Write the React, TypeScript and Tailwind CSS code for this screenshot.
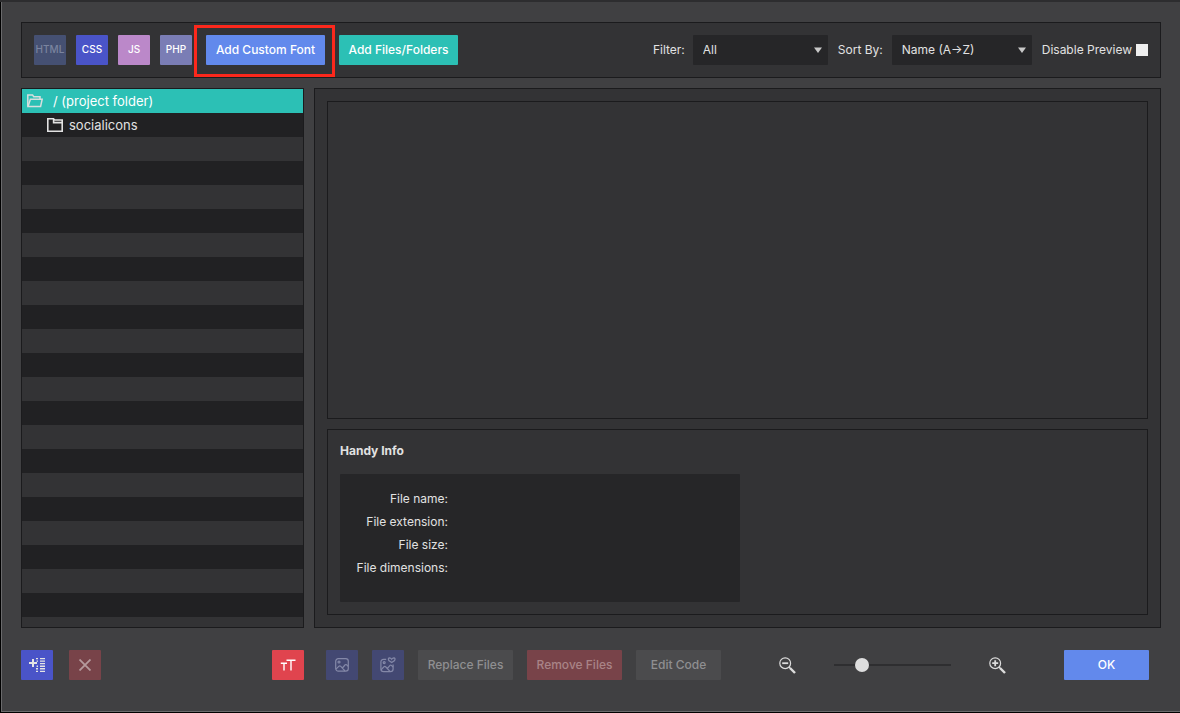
import { InputHTMLAttributes, ReactNode, SelectHTMLAttributes } from "react";

const badges = [
  { label: "HTML", className: "bg-[#455072] text-[#7b849f]", disabled: true },
  { label: "CSS", className: "bg-[#4a54c8] text-white" },
  { label: "JS", className: "bg-[#bb88c9] text-white" },
  { label: "PHP", className: "bg-[#7a7db5] text-white" },
];

const fileInfo = ["File name:", "File extension:", "File size:", "File dimensions:"];

function FolderOpenIcon() {
  return (
    <svg width="16" height="14" viewBox="0 0 16 14" fill="none" stroke="currentColor" strokeWidth="1.5">
      <path d="M.8 12.4V1h4.8l1.2 1.8H13v2.4" />
      <path d="M1 12.4 3.4 5.2H15.2L13.6 12.4Z" />
    </svg>
  );
}

function FolderIcon() {
  return (
    <svg width="16" height="14" viewBox="0 0 16 14" fill="none" stroke="currentColor" strokeWidth="1.6">
      <path d="M.8 13.2V.8h5.7l1.2 1.2h7.5v11.2Z" />
      <path d="M6.6 1v3.6h8.4" />
    </svg>
  );
}

function AddListIcon() {
  return (
    <svg width="16" height="14" viewBox="0 0 16 14" fill="currentColor">
      <path d="M0 4h3V1h2v3h3v2H5v3H3V6H0Z" />
      <path d="M11 0h5v1.3h-5zM11 2.5h5v1.3h-5zM11 5h5v1.3h-5zM11 7.6h5v1.3h-5zM11 10.1h5v1.3h-5zM11 12.7h5V14h-5z" />
      <path d="M7 0h2v1.3H7zM7.6 2.5H9v1.3H7.6zM7.6 7.6H9v1.3H7.6zM7 10.1h2v1.3H7zM7 12.7h2V14H7z" />
    </svg>
  );
}

function CloseIcon() {
  return (
    <svg width="12" height="12" viewBox="0 0 12 12" stroke="currentColor" strokeWidth="1.8">
      <path d="M.5.5l11 11M11.5.5l-11 11" />
    </svg>
  );
}

function TextSizeIcon() {
  return (
    <svg width="16" height="12" viewBox="0 0 16 12" fill="none" stroke="currentColor" strokeWidth="1.4">
      <path d="M6.5 1.3h9M11 1.3v10.2M.8 4.3h6.2M4 4.3v7.2" />
    </svg>
  );
}

function ImageIcon() {
  return (
    <svg width="14" height="14" viewBox="0 0 14 14" fill="none" stroke="currentColor" strokeWidth="1.2">
      <rect x=".7" y=".7" width="12.6" height="12.4" rx="2.6" />
      <circle cx="4" cy="4" r="1" />
      <path d="M1 11.2 4 8.2q.8-.7 1.6 0L10 13M7.4 10l2.8-3.2q.7-.6 1.4 0L13.2 8.4" />
    </svg>
  );
}

function ImageLinkIcon() {
  return (
    <svg width="16" height="16" viewBox="0 0 16 16" fill="none" stroke="currentColor" strokeWidth="1.2">
      <path d="M6.2 2.4H3.6Q.9 2.4.9 5.1v6.8q0 2.7 2.7 2.7h6.8q2.7 0 2.7-2.7V7.6" />
      <circle cx="4.2" cy="5.6" r="1" />
      <path d="M1 12.8l3-3q.8-.7 1.6 0l4.4 4.6M7.2 11.6l2.8-3.2q.7-.6 1.4 0l1.6 1.6" />
      <path d="M11.7 5.6 8.8 3.6Q7.6 1 9.6.9q1.2 0 2.1 1.4Q12.6.9 13.8.9q2 .1.8 2.7Z" />
    </svg>
  );
}

function ZoomIcon({ plus = false }: { plus?: boolean }) {
  return (
    <svg width="17" height="17" viewBox="0 0 17 17" fill="none" stroke="currentColor">
      <circle cx="6.2" cy="6.2" r="5.4" strokeWidth="1.2" />
      <path d={plus ? "M3.2 6.2h6M6.2 3.2v6" : "M3.2 6.2h6"} strokeWidth="1.8" />
      <path d="M10 10l1.4 1.4" strokeWidth="1.2" />
      <path d="M11 11l5 5" strokeWidth="2.4" />
    </svg>
  );
}

interface ToolButtonProps {
  children: ReactNode;
  className: string;
  label?: string;
  disabled?: boolean;
}

function ToolButton({ children, className, label, disabled }: ToolButtonProps) {
  return (
    <button
      type="button"
      aria-label={label}
      disabled={disabled}
      className={`flex h-[30px] shrink-0 items-center justify-center rounded-[1px] font-medium ${className}`}
    >
      {children}
    </button>
  );
}

function Select({ className, ...props }: SelectHTMLAttributes<HTMLSelectElement>) {
  return (
    <div className={`relative ${className}`}>
      <select
        {...props}
        className="h-[30px] w-full appearance-none rounded-[1px] bg-[#262628] pl-2.5 pr-6 outline-none"
      />
      <svg
        className="pointer-events-none absolute right-1.5 top-3 text-[#c8c8c8]"
        width="8"
        height="6"
        viewBox="0 0 8 6"
        fill="currentColor"
      >
        <path d="M0 .5h8L4 6Z" />
      </svg>
    </div>
  );
}

function Slider(props: InputHTMLAttributes<HTMLInputElement>) {
  return (
    <input
      {...props}
      type="range"
      className="h-4 w-[117px] appearance-none bg-transparent [&::-webkit-slider-runnable-track]:h-0.5 [&::-webkit-slider-runnable-track]:bg-[#2e2e30] [&::-webkit-slider-thumb]:-mt-1.5 [&::-webkit-slider-thumb]:size-3.5 [&::-webkit-slider-thumb]:appearance-none [&::-webkit-slider-thumb]:rounded-full [&::-webkit-slider-thumb]:bg-[#dedede]"
    />
  );
}

export default function App() {
  return (
    <div className="flex min-h-screen flex-col border-t-2 border-[#2d2d2f] bg-black pb-px pl-px font-['Inter',sans-serif] text-xs text-[#e2e2e2]">
      <div className="flex flex-1 flex-col border-b border-l border-[#6a6a6c] bg-[#404042] px-[19px] pb-[31px] pt-5">
        {/* Toolbar */}
        <header className="flex h-14 items-center justify-between border border-[#1b1b1d] bg-[#333335] px-3">
          <div className="flex items-center gap-3.5">
            <div className="flex gap-2.5">
              {badges.map(({ label, className, disabled }) => (
                <ToolButton key={label} disabled={disabled} className={`w-8 text-[10px] ${className}`}>
                  {label}
                </ToolButton>
              ))}
            </div>
            <div className="relative">
              <ToolButton className="w-[119px] bg-[#6289ec] text-white">Add Custom Font</ToolButton>
              <div className="pointer-events-none absolute -bottom-3 -left-3 -right-2.5 -top-2.5 border-3 border-[#fc281c]" />
            </div>
            <ToolButton className="w-[119px] bg-[#2cc0b5] text-white">Add Files/Folders</ToolButton>
          </div>
          <div className="flex items-center gap-2.5">
            <div className="flex items-center gap-2">
              <label htmlFor="filter">Filter:</label>
              <Select id="filter" className="w-[135px]">
                <option>All</option>
              </Select>
            </div>
            <div className="flex items-center gap-[9px]">
              <label htmlFor="sort">Sort By:</label>
              <Select id="sort" className="w-[140px]">
                <option>Name (A→Z)</option>
              </Select>
            </div>
            <div className="flex items-center gap-1">
              <label htmlFor="disable-preview">Disable Preview</label>
              <input id="disable-preview" type="checkbox" className="size-3 appearance-none bg-[#efefef]" />
            </div>
          </div>
        </header>

        <main className="mt-2.5 flex flex-1 gap-2.5">
          {/* Folder tree */}
          <ul className="w-[283px] shrink-0 border border-[#1b1b1d] bg-[repeating-linear-gradient(#333335_0_24px,#212123_24px_48px)] text-[13px]">
            <li className="flex h-6 items-center gap-2.5 bg-[#2cc0b5] pl-[5px] text-[#d8dede]">
              <FolderOpenIcon />
              <span className="pt-0.5 text-white">/ (project folder)</span>
            </li>
            <li className="flex h-6 items-center gap-1.5 pl-[25px]">
              <FolderIcon />
              <span className="pt-0.5">socialicons</span>
            </li>
          </ul>

          {/* Preview and details */}
          <div className="flex flex-1 flex-col gap-2.5 border border-[#1b1b1d] bg-[#333335] p-3">
            <section className="flex-1 border border-[#1b1b1d]" />
            <section className="border border-[#1b1b1d] p-3">
              <h2 className="mb-3.5 h-[18px] leading-[18px] font-bold">Handy Info</h2>
              <dl className="h-32 w-[400px] rounded-[1px] bg-[#262628] pt-[13px]">
                {fileInfo.map((name) => (
                  <div key={name} className="flex h-[23px] items-center">
                    <dt className="w-[108px] text-right">{name}</dt>
                    <dd />
                  </div>
                ))}
              </dl>
            </section>
          </div>
        </main>

        {/* Actions */}
        <footer className="mt-[22px] flex items-center pr-3">
          <div className="flex w-[283px] shrink-0 gap-4">
            <ToolButton label="Add folder" className="w-8 bg-[#4a54c8] text-[#e4e4e4]">
              <AddListIcon />
            </ToolButton>
            <ToolButton label="Delete folder" disabled className="w-8 bg-[#784349] text-[#b59a9d]">
              <CloseIcon />
            </ToolButton>
            <ToolButton label="Font settings" className="ml-auto w-8 bg-[#e0444e] text-white">
              <TextSizeIcon />
            </ToolButton>
          </div>
          <div className="ml-[22px] flex gap-3.5">
            <ToolButton label="Image" disabled className="w-8 bg-[#434872] text-[#8488a8]">
              <ImageIcon />
            </ToolButton>
            <ToolButton label="Linked image" disabled className="w-8 bg-[#434872] text-[#8488a8]">
              <ImageLinkIcon />
            </ToolButton>
            <ToolButton disabled className="w-[95px] bg-[#4b4b4d] text-[#8f8f91]">
              Replace Files
            </ToolButton>
            <ToolButton disabled className="w-[95px] bg-[#784349] text-[#a98387]">
              Remove Files
            </ToolButton>
            <ToolButton disabled className="w-[85px] bg-[#4b4b4d] text-[#8f8f91]">
              Edit Code
            </ToolButton>
          </div>
          <div className="flex flex-1 items-center justify-center gap-[38px] text-[#dcdcdc]">
            <button type="button" aria-label="Zoom out">
              <ZoomIcon />
            </button>
            <Slider aria-label="Zoom" min={0} max={100} defaultValue={20} />
            <button type="button" aria-label="Zoom in">
              <ZoomIcon plus />
            </button>
          </div>
          <ToolButton className="w-[85px] bg-[#6289ec] text-white">OK</ToolButton>
        </footer>
      </div>
    </div>
  );
}
